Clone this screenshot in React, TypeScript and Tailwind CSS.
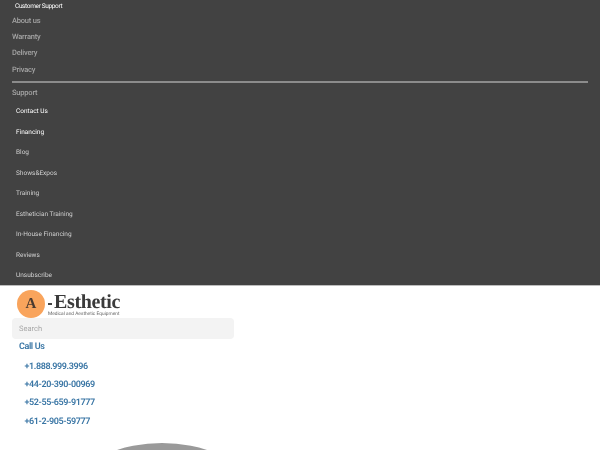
const mainLinks = ["About us", "Warranty", "Delivery", "Privacy"];
const supportLinks = [
  "Contact Us",
  "Financing",
  "Blog",
  "Shows&Expos",
  "Training",
  "Esthetician Training",
  "In-House Financing",
  "Reviews",
  "Unsubscribe",
];
const phones = ["+1.888.999.3996", "+44-20-390-00969", "+52-55-659-91777", "+61-2-905-59777"];

export default function App() {
  return (
    <div className="h-[450px] w-[600px] overflow-hidden bg-white font-['Roboto',sans-serif] antialiased [text-rendering:geometricPrecision] [will-change:transform]">
      {/* dark footer menu */}
      <div className="h-[286px] border-b border-[#bdbdbd] bg-[#424242] pl-3 pr-3">
        <div className="pl-[3px] text-[6.5px] leading-[12.5px] tracking-[-0.35px] text-white">Customer Support</div>
        <ul className="flex flex-col text-[7.5px] leading-[16.4px] font-medium tracking-[-0.2px] text-[#a3a3a3]">
          {mainLinks.map((l) => (
            <li key={l}>{l}</li>
          ))}
        </ul>
        <div className="mt-[2.5px] h-0.5 bg-[#8c8c8c]" />
        <div className="mt-[2px] text-[7.5px] leading-[16px] font-medium tracking-[-0.2px] text-[#a3a3a3]">Support</div>
        <ul className="mt-[0.5px] flex flex-col pl-1 text-[6.5px]">
          {supportLinks.map((l, i) => (
            <li key={l} className={`h-[20.5px] leading-[20.5px] ${i < 2 ? "text-white" : "text-[#d0d0d0]"}`}>
              {l}
            </li>
          ))}
        </ul>
      </div>

      {/* logo */}
      <div className="flex h-8 items-center pl-[17px]">
        <div className="flex h-7 w-7 shrink-0 items-center justify-center self-end rounded-full bg-[#f9a45c] font-['Liberation_Serif',serif] text-[15px] font-bold text-[#4a3a30]">
          A
        </div>
        <div className="mt-[4px] ml-[3px] h-0.5 w-1 bg-[#444]" />
        <div className="mt-2 flex flex-col">
          <span className="ml-[2px] font-['Liberation_Serif',serif] text-[20px] leading-[16px] font-bold tracking-[-0.35px] text-[#3a3a3a]">
            Esthetic
          </span>
          <span className="mt-[2px] -ml-1 text-[4.8px] leading-[6px] text-[#666]">Medical and Aesthetic Equipment</span>
        </div>
      </div>

      {/* search */}
      <div className="ml-3 flex h-[21px] w-[222px] items-center rounded-sm bg-[#f3f3f3] pl-[7px] text-[7.5px] text-[#a8a8a8]">
        Search
      </div>

      {/* phones */}
      <div className="pt-px pl-[19px] text-[#3a76a5]">
        <div className="text-[9px] leading-[14px] font-semibold tracking-[-0.4px]">Call Us</div>
        <ul className="mt-1 flex flex-col pl-[5.5px] text-[9px] font-semibold tracking-[-0.4px]">
          {phones.map((p) => (
            <li key={p} className="h-[18.2px] leading-[18.2px]">{p}</li>
          ))}
        </ul>
      </div>

      {/* round image, cut off by the window */}
      <div className="mt-[12px] ml-[14px] h-[296px] w-[296px] rounded-full bg-[#9a9a9a]" />
    </div>
  );
}
